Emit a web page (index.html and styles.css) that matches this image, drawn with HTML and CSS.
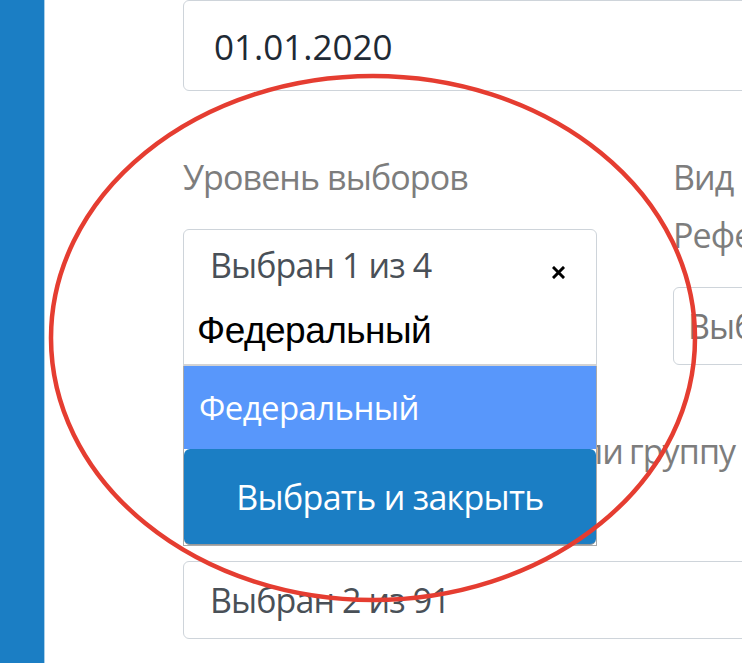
FILE: index.html
```html
<!DOCTYPE html>
<html lang="ru">
<head>
<meta charset="utf-8">
<title>Фильтр</title>
<link rel="stylesheet" href="styles.css">
</head>
<body>
<div class="page">
  <aside class="sidebar"></aside>
  <main class="content">
    <div class="input date-input">01.01.2020</div>

    <div class="row">
      <div class="col">
        <div class="label">Уровень выборов</div>
        <div class="select-wrap">
          <div class="select open">
            <span>Выбран 1 из 4</span>
            <svg class="dd-clear" width="13" height="13" viewBox="0 0 13 13"><path d="M2 2L11 11M11 2L2 11" stroke="#000" stroke-width="3" stroke-linecap="square"/></svg>
          </div>
          <div class="dropdown">
            <div class="dd-chosen">Федеральный</div>
            <div class="dd-list">
              <div class="dd-option active">Федеральный</div>
              <div class="dd-button">Выбрать и закрыть</div>
            </div>
          </div>
        </div>
      </div>
      <div class="col">
        <div class="label">Вид выборов /<br>Референдум</div>
        <div class="input muted">Выбран 0 из 3</div>
      </div>
    </div>

    <div class="group">
      <div class="label label-tight">Выберите комиссию ИК или группу<br>избирательной кампании</div>
      <div class="select">Выбран 2 из 91</div>
    </div>
  </main>
  <svg class="annotation" width="742" height="663" viewBox="0 0 742 663">
    <ellipse cx="373" cy="338" rx="322" ry="262" fill="none" stroke="#e53d31" stroke-width="4.5"/>
  </svg>
</div>
</body>
</html>
```
FILE: styles.css
```css
* { box-sizing: border-box; }
html, body { margin: 0; padding: 0; background: #fff; }
body {
  font-family: "Open Sans", "Noto Sans", sans-serif;
  width: 742px;
  height: 663px;
  overflow: hidden;
}
.page {
  position: relative;
  display: flex;
  width: 742px;
  height: 663px;
  overflow: hidden;
}
.sidebar {
  flex: 0 0 45px;
  background: #1b7ec4;
  border-right: 1px solid #a9cfe9;
}
.content {
  flex: 0 0 auto;
  width: 1000px;
  padding-left: 138px;
}
.input, .select {
  height: 78px;
  border: 1px solid #ced4da;
  border-radius: 6px;
  font-size: 34px;
  letter-spacing: -0.9px;
  display: flex;
  align-items: center;
  background: #fff;
  white-space: nowrap;
}
.date-input {
  width: 700px;
  height: 91px;
  padding-left: 30px;
  padding-top: 2px;
  color: #1e2a35;
  font-size: 35px;
  letter-spacing: 0;
}
.row {
  display: flex;
  gap: 76px;
  margin-top: 57px;
}
.col { width: 414px; flex: 0 0 414px; }
.group { margin-top: 57px; }
.label {
  font-size: 34px;
  letter-spacing: -0.9px;
  line-height: 58px;
  color: #7d7d7d;
  margin-bottom: 23px;
  white-space: nowrap;
}
.label-tight { word-spacing: -2px; }
.select {
  padding-left: 26px;
  color: #495057;
  width: 700px;
}
.col .select { width: 414px; }
.select.open {
  justify-content: space-between;
  align-items: flex-start;
  padding: 12px 31px 0 26px;
}
.dd-clear { margin-top: 24px; }
.input.muted {
  padding-left: 14px;
  color: #777;
  width: 414px;
}
.select-wrap { position: relative; }
.dropdown {
  position: absolute;
  top: 62px;
  left: 0;
  width: 414px;
  z-index: 2;
}
.dd-chosen {
  height: 75px;
  padding: 10px 0 0 13px;
  border: 1px solid #ced4da;
  border-top: 0;
  border-bottom: 2px solid #d3d3d3;
  background: #fff;
  font-family: "Liberation Sans", "Arial", sans-serif;
  font-size: 37px;
  letter-spacing: -0.5px;
  color: #000;
  line-height: 60px;
}
.dd-list {
  border: 1px solid #aaa;
  border-top: 0;
  background: #fff;
}
.dd-option {
  height: 83px;
  display: flex;
  align-items: center;
  padding-left: 15px;
  font-size: 33px;
  letter-spacing: -0.6px;
  color: #fff;
  background: #5897fb;
}
.dd-button {
  height: 96px;
  display: flex;
  align-items: center;
  justify-content: center;
  background: #1b7ec4;
  color: #fff;
  font-size: 34px;
  letter-spacing: -0.7px;
  border-radius: 6px;
  border-bottom: 1px solid #999;
}
.annotation {
  position: absolute;
  left: 0;
  top: 0;
  pointer-events: none;
  z-index: 5;
}
```
